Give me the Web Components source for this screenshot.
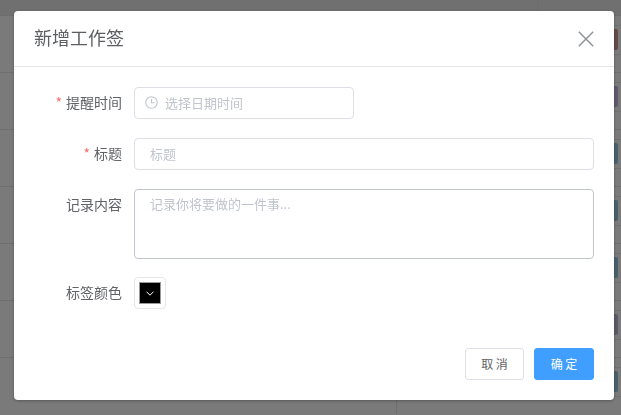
<!DOCTYPE html>
<html lang="zh-CN">
<head>
<meta charset="utf-8">
<title>新增工作签</title>
<style>
  html, body { margin: 0; height: 100%; overflow: hidden; }
  body { font: 14px "Noto Sans CJK SC", "Liberation Sans", sans-serif; }
</style>
</head>
<body>
<board-page>
  <board-row color="#c99490"></board-row>
  <board-row color="#c2aee0"></board-row>
  <board-row color="#90c0dc"></board-row>
  <board-row color="#90c0dc"></board-row>
  <board-row color="#90c0dc"></board-row>
  <board-row color="#b8b4d0"></board-row>
  <board-row color="#90c0dc"></board-row>
</board-page>

<modal-dialog>
  <span slot="title">新增工作签</span>

  <form-item label="提醒时间" required>
    <text-field icon placeholder="选择日期时间" style="width:220px"></text-field>
  </form-item>
  <form-item label="标题" required>
    <text-field placeholder="标题"></text-field>
  </form-item>
  <form-item label="记录内容" style="margin-bottom:18px">
    <text-area placeholder="记录你将要做的一件事..."></text-area>
  </form-item>
  <form-item label="标签颜色">
    <color-picker></color-picker>
  </form-item>

  <ui-button slot="footer">取 消</ui-button>
  <ui-button slot="footer" primary>确 定</ui-button>
</modal-dialog>

<script>
class BoardPage extends HTMLElement {
  constructor() {
    super();
    this.attachShadow({ mode: "open" }).innerHTML = `
      <style>
        :host { display: block; height: 415px; overflow: hidden; background: #f5f5f5; }
        .head {
          height: 15px;
          background: #e0e1e3;
          border-bottom: 1px solid #d8d9db;
          display: grid;
          grid-template-columns: 538px 1fr;
        }
        .head div { border-right: 1px solid #d8d9db; }
      </style>
      <div class="head"><div></div></div>
      <slot></slot>
    `;
  }
}
customElements.define("board-page", BoardPage);

class BoardRow extends HTMLElement {
  constructor() {
    super();
    this.attachShadow({ mode: "open" }).innerHTML = `
      <style>
        :host {
          display: grid;
          grid-template-columns: 397px 1fr;
          height: 56px;
          border-bottom: 1px solid #dedede;
        }
        :host(:last-child) { border-bottom: 0; }
        .left { border-right: 1px solid #dedede; }
        .right { display: flex; flex-direction: column; }
        .line { height: 9px; border-bottom: 1px solid #e2e2e2; flex: none; }
        .body { height: 29px; display: flex; justify-content: flex-end; padding: 3px 3px 0 0; box-sizing: border-box; border-bottom: 1px solid #e2e2e2; }
        .pill { width: 60px; height: 21px; border-radius: 2px; }
      </style>
      <div class="left"></div>
      <div class="right">
        <div class="line"></div>
        <div class="body"><div class="pill"></div></div>
      </div>
    `;
  }
  connectedCallback() {
    this.shadowRoot.querySelector(".pill").style.background = this.getAttribute("color");
  }
}
customElements.define("board-row", BoardRow);

class ModalDialog extends HTMLElement {
  constructor() {
    super();
    this.attachShadow({ mode: "open" }).innerHTML = `
      <style>
        :host {
          position: fixed;
          inset: 0;
          display: block;
          background: rgba(0, 0, 0, .5);
        }
        .box {
          width: 600px;
          height: 389px;
          margin: 11px 0 0 14px;
          background: #fff;
          border-radius: 4px;
          box-shadow: 0 1px 3px rgba(0, 0, 0, .3);
          display: flex;
          flex-direction: column;
        }
        header {
          height: 56px;
          flex: none;
          box-sizing: border-box;
          border-bottom: 1px solid #e4e2ec;
          padding: 0 20px 3px 20px;
          display: flex;
          align-items: center;
          justify-content: space-between;
          font-size: 18px;
          color: #5c5e62;
        }
        header svg { display: block; margin-top: 4px; }
        main { flex: 1; padding: 20px 20px 0 0; }
        footer {
          flex: none;
          height: 52px;
          box-sizing: border-box;
          padding-right: 20px;
          display: flex;
          justify-content: flex-end;
          align-items: flex-start;
          gap: 10px;
        }
      </style>
      <div class="box">
        <header>
          <slot name="title"></slot>
          <svg width="16" height="16" viewBox="0 0 16 16" fill="none" stroke="#909399" stroke-width="1.5">
            <path d="M.8 .8 15.2 15.2M15.2 .8 .8 15.2"/>
          </svg>
        </header>
        <main><slot></slot></main>
        <footer><slot name="footer"></slot></footer>
      </div>
    `;
  }
}
customElements.define("modal-dialog", ModalDialog);

class FormItem extends HTMLElement {
  constructor() {
    super();
    this.attachShadow({ mode: "open" }).innerHTML = `
      <style>
        :host { display: flex; margin-bottom: 19px; }
        label {
          width: 108px;
          flex: none;
          box-sizing: border-box;
          margin-right: 12px;
          text-align: right;
          line-height: 30px;
          font-size: 14px;
          color: #606266;
        }
        i { font-style: normal; color: #f56c6c; margin-right: 4px; }
        div { flex: 1; min-width: 0; }
      </style>
      <label></label>
      <div><slot></slot></div>
    `;
  }
  connectedCallback() {
    const label = this.shadowRoot.querySelector("label");
    label.textContent = this.getAttribute("label");
    if (this.hasAttribute("required")) {
      const star = document.createElement("i");
      star.textContent = "*";
      label.prepend(star);
    }
  }
}
customElements.define("form-item", FormItem);

class TextField extends HTMLElement {
  constructor() {
    super();
    this.attachShadow({ mode: "open" }).innerHTML = `
      <style>
        :host {
          display: flex;
          align-items: center;
          height: 32px;
          box-sizing: border-box;
          border: 1px solid #dcdfe6;
          border-radius: 4px;
          padding: 0 0 2px 15px;
          font-size: 13px;
          color: #c0c4cc;
          background: #fff;
        }
        svg { display: none; margin: 0 7px 0 -5px; flex: none; }
        :host([icon]) svg { display: block; }
      </style>
      <svg width="13" height="13" viewBox="0 0 13 13" fill="none" stroke="#c0c4cc" stroke-width="1.1">
        <circle cx="6.5" cy="6.5" r="5.7"/>
        <path d="M6.5 3v3.7H9.6"/>
      </svg>
      <span></span>
    `;
  }
  connectedCallback() {
    this.shadowRoot.querySelector("span").textContent = this.getAttribute("placeholder");
  }
}
customElements.define("text-field", TextField);

class TextArea extends HTMLElement {
  constructor() {
    super();
    this.attachShadow({ mode: "open" }).innerHTML = `
      <style>
        :host {
          display: block;
          height: 70px;
          box-sizing: border-box;
          border: 1px solid #c0c4cc;
          border-radius: 4px;
          padding: 4px 15px;
          font-size: 13px;
          line-height: 20px;
          color: #c0c4cc;
          background: #fff;
        }
      </style>
      <span></span>
    `;
  }
  connectedCallback() {
    this.shadowRoot.querySelector("span").textContent = this.getAttribute("placeholder");
  }
}
customElements.define("text-area", TextArea);

class ColorPicker extends HTMLElement {
  constructor() {
    super();
    this.attachShadow({ mode: "open" }).innerHTML = `
      <style>
        :host {
          display: flex;
          align-items: center;
          justify-content: center;
          width: 32px;
          height: 32px;
          box-sizing: border-box;
          border: 1px solid #e6e6e6;
          border-radius: 4px;
          background: #fff;
        }
        div {
          width: 22px;
          height: 22px;
          box-sizing: border-box;
          border: 1px solid #999;
          background: #000;
          display: flex;
          align-items: center;
          justify-content: center;
        }
      </style>
      <div>
        <svg width="8" height="5" viewBox="0 0 8 5" fill="none" stroke="#fff" stroke-width="1">
          <path d="M.5 .7 4 4.2 7.5 .7"/>
        </svg>
      </div>
    `;
  }
}
customElements.define("color-picker", ColorPicker);

class UiButton extends HTMLElement {
  constructor() {
    super();
    this.attachShadow({ mode: "open" }).innerHTML = `
      <style>
        :host {
          display: flex;
          align-items: center;
          justify-content: center;
          width: 59px;
          height: 32px;
          box-sizing: border-box;
          border: 1px solid #dcdfe6;
          border-radius: 3px;
          padding-bottom: 2px;
          font-size: 12px;
          color: #606266;
          background: #fff;
        }
        :host([primary]) {
          width: 60px;
          border-color: #409eff;
          background: #409eff;
          color: #fff;
        }
      </style>
      <slot></slot>
    `;
  }
}
customElements.define("ui-button", UiButton);
</script>
</body>
</html>
